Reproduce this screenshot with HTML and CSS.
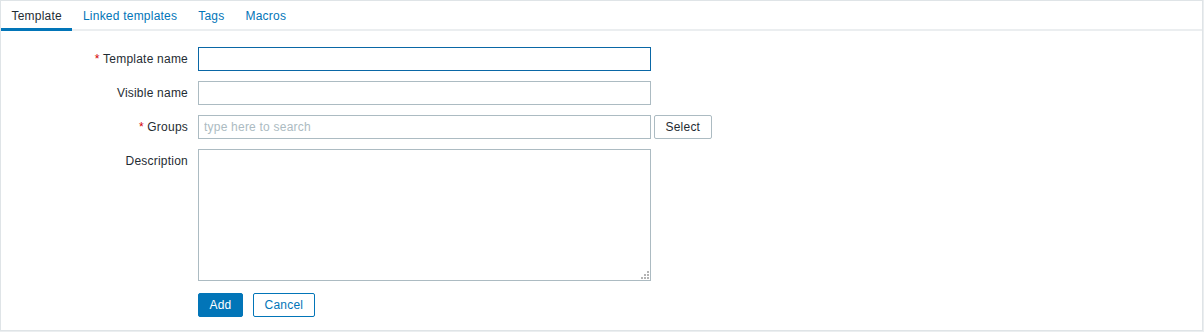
FILE: index.html
```html
<!DOCTYPE html>
<html>
<head>
<meta charset="utf-8">
<link rel="stylesheet" href="styles.css">
</head>
<body>
<div class="wrap">
  <ul class="tabs">
    <li class="tab active"><a>Template</a></li>
    <li class="tab"><a>Linked templates</a></li>
    <li class="tab"><a>Tags</a></li>
    <li class="tab"><a>Macros</a></li>
  </ul>
  <form class="form">
    <label class="lbl"><span class="req">*</span> Template name</label>
    <div class="field"><input class="inp focused" type="text"></div>
    <label class="lbl">Visible name</label>
    <div class="field"><input class="inp" type="text"></div>
    <label class="lbl"><span class="req">*</span> Groups</label>
    <div class="field row"><input class="inp" type="text" placeholder="type here to search"><button type="button" class="btn grey">Select</button></div>
    <label class="lbl">Description</label>
    <div class="field">
      <div class="ta-wrap">
        <textarea class="ta"></textarea>
        <svg class="grip" width="8" height="8" viewBox="0 0 8 8"><rect x="6" y="0" width="2" height="2"/><rect x="3" y="3" width="2" height="2"/><rect x="6" y="3" width="2" height="2"/><rect x="0" y="6" width="2" height="2"/><rect x="3" y="6" width="2" height="2"/><rect x="6" y="6" width="2" height="2"/></svg>
      </div>
    </div>
    <div></div>
    <div class="field row btns"><button type="button" class="btn main">Add</button><button type="button" class="btn alt">Cancel</button></div>
  </form>
</div>
</body>
</html>
```
FILE: styles.css
```css
html, body { margin: 0; padding: 0; }
body {
  background: #ebeef0;
  font-family: "Liberation Sans", Arial, sans-serif;
  font-size: 12px;
  letter-spacing: 0.22px;
  color: #1f2c33;
}
.wrap {
  width: 1201px;
  height: 329px;
  border: 1px solid #dfe4e7;
  background: #fff;
}
.tabs {
  list-style: none;
  margin: 0;
  padding: 0;
  display: flex;
  height: 28px;
  border-bottom: 2px solid #ebeef0;
}
.tab {
  height: 27px;
  border-bottom: 3px solid transparent;
}
.tab a {
  display: block;
  padding: 8px 10.5px 5px;
  line-height: 14px;
  color: #0275b8;
}
.tab.active { border-bottom-color: #0275b8; }
.tab.active a { color: #1f2c33; }
.form {
  display: grid;
  grid-template-columns: 187px 1fr;
  column-gap: 10px;
  row-gap: 10px;
  padding-top: 16px;
  margin: 0;
}
.lbl {
  text-align: right;
  line-height: 14px;
  padding-top: 5px;
}
.req { color: #d40000; }
.field { display: flex; }
.row { gap: 3px; align-items: flex-start; }
.inp {
  box-sizing: border-box;
  width: 453px;
  height: 24px;
  margin: 0;
  padding: 0 5px;
  border: 1px solid #acbbc2;
  border-radius: 0;
  font: inherit;
  letter-spacing: inherit;
  color: #1f2c33;
  background: #fff;
  outline: none;
}
.inp.focused { border-color: #0a67a6; }
.inp::placeholder { color: #acbbc2; }
.ta-wrap { position: relative; }
.ta {
  box-sizing: border-box;
  width: 453px;
  height: 132px;
  margin: 0;
  padding: 4px 5px;
  border: 1px solid #acbbc2;
  border-radius: 0;
  font: inherit;
  display: block;
  outline: none;
  resize: none;
}
.grip {
  position: absolute;
  right: 2px;
  bottom: 2px;
  fill: #b4b4b4;
}
.btns { gap: 10px; margin-top: 2px; }
.btn {
  box-sizing: border-box;
  height: 24px;
  margin: 0;
  padding: 0 10.5px;
  border: 1px solid #0275b8;
  border-radius: 2px;
  font: inherit;
  letter-spacing: inherit;
  line-height: 22px;
  cursor: pointer;
}
.main { background: #0275b8; color: #fff; }
.alt { background: #fff; color: #0275b8; }
.grey { background: #fff; color: #1f2c33; border-color: #acbbc2; }
```
